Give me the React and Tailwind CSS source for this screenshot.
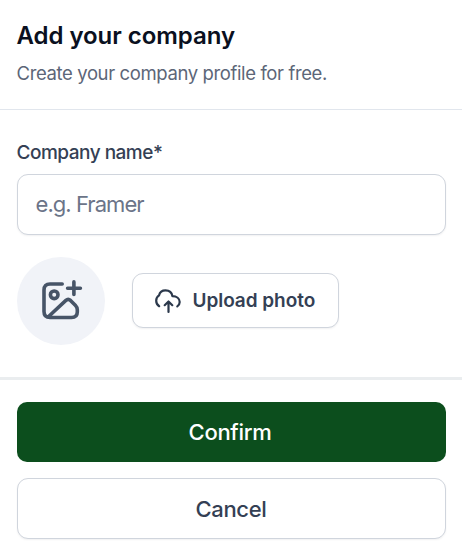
function AddImageIcon() {
  return (
    <svg width="44" height="44" viewBox="0 0 44 44" fill="none" stroke="#475467" strokeWidth="3.6" strokeLinecap="round" strokeLinejoin="round" aria-hidden="true">
      <path d="M23.2 5H11Q5 5 5 11v21.5Q5 38.5 11 38.5h21.5q5.8 0 5.8-5.5v-2.2q0-2.6-2-4.6l-4.8-4.8q-2.3-2.1-4.6 0L9.6 37.5" />
      <circle cx="15.2" cy="15.8" r="3.8" />
      <path d="M34.9 2.9v12.6M28.6 9.2h12.8" />
    </svg>
  );
}

function CloudUploadIcon() {
  return (
    <svg width="28" height="26" viewBox="0 0 28 26" fill="none" stroke="#2b384b" strokeWidth="2.2" strokeLinecap="round" strokeLinejoin="round" aria-hidden="true">
      <path d="M5.2 18.2C3.2 17 2.2 15 2.2 12.8C2.2 10.3 3.3 8.5 5 7.4C5.8 4.2 8.3 2.4 11.5 2.4C15.2 2.4 17.9 4.8 18.4 8.2C22.6 8.2 25.7 10.5 25.7 14.1C25.7 16 24.7 17.5 23.3 18.4" />
      <path d="M14.5 24V13.7M10.7 17.2l3.8-3.7 3.8 3.7" />
    </svg>
  );
}

export default function App() {
  return (
    <main className="flex h-[559px] w-full flex-col bg-white font-['Inter',sans-serif]">
      <header className="h-[110px] shrink-0 border-b border-[#e1e6ed] px-[16.5px] pt-5">
        <h1 className="text-[24px] leading-8 font-semibold tracking-[-0.05px] whitespace-nowrap text-[#0a1020]">Add your company</h1>
        <p className="mt-[9px] text-[18.5px] leading-6 tracking-[-0.38px] whitespace-nowrap text-[#5c6678]">Create your company profile for free.</p>
      </header>

      <section className="h-[267px] shrink-0 px-[16.5px] pt-[31px]">
        <label htmlFor="company" className="block h-6 text-[19px] leading-6 font-medium tracking-[-0.5px] whitespace-nowrap text-[#344054]">Company name*</label>
        <input
          id="company"
          placeholder="e.g. Framer"
          className="mt-[9px] block h-[60.5px] w-[429px] rounded-[11px] border border-[#d0d5dd] bg-white px-[18px] text-[22px] tracking-[-0.95px] shadow-[0_1px_2px_rgba(16,24,40,0.06)] outline-none placeholder:text-[#6b7488]"
        />
        <div className="mt-[22px] flex items-center gap-[27px]">
          <div className="flex size-[88px] items-center justify-center rounded-full bg-[#f1f3f8]">
            <AddImageIcon />
          </div>
          <button className="flex h-[55px] w-[207.5px] items-center gap-[11px] rounded-[11px] border border-[#d0d5dd] bg-white pl-[21px] text-[19px] font-semibold tracking-[-0.05px] whitespace-nowrap text-[#344054] shadow-[0_1px_2px_rgba(16,24,40,0.06)]">
            <CloudUploadIcon />
            <span className="pt-0.5">Upload photo</span>
          </button>
        </div>
      </section>

      <footer className="flex flex-1 flex-col gap-4 border-t-[3px] border-[#eaedef] px-[16.5px] pt-[21.5px]">
        <button className="h-[60.5px] w-[429px] shrink-0 rounded-[10px] bg-[#0c4e1d] pt-0.5 pr-0.5 text-[22px] font-medium tracking-[-0.3px] text-white">Confirm</button>
        <button className="h-[60.5px] w-[429px] shrink-0 rounded-[11px] border border-[#d0d5dd] bg-white pt-0.5 text-[22px] font-medium tracking-[-0.3px] text-[#344054] shadow-[0_1px_2px_rgba(16,24,40,0.06)]">Cancel</button>
      </footer>
    </main>
  );
}
